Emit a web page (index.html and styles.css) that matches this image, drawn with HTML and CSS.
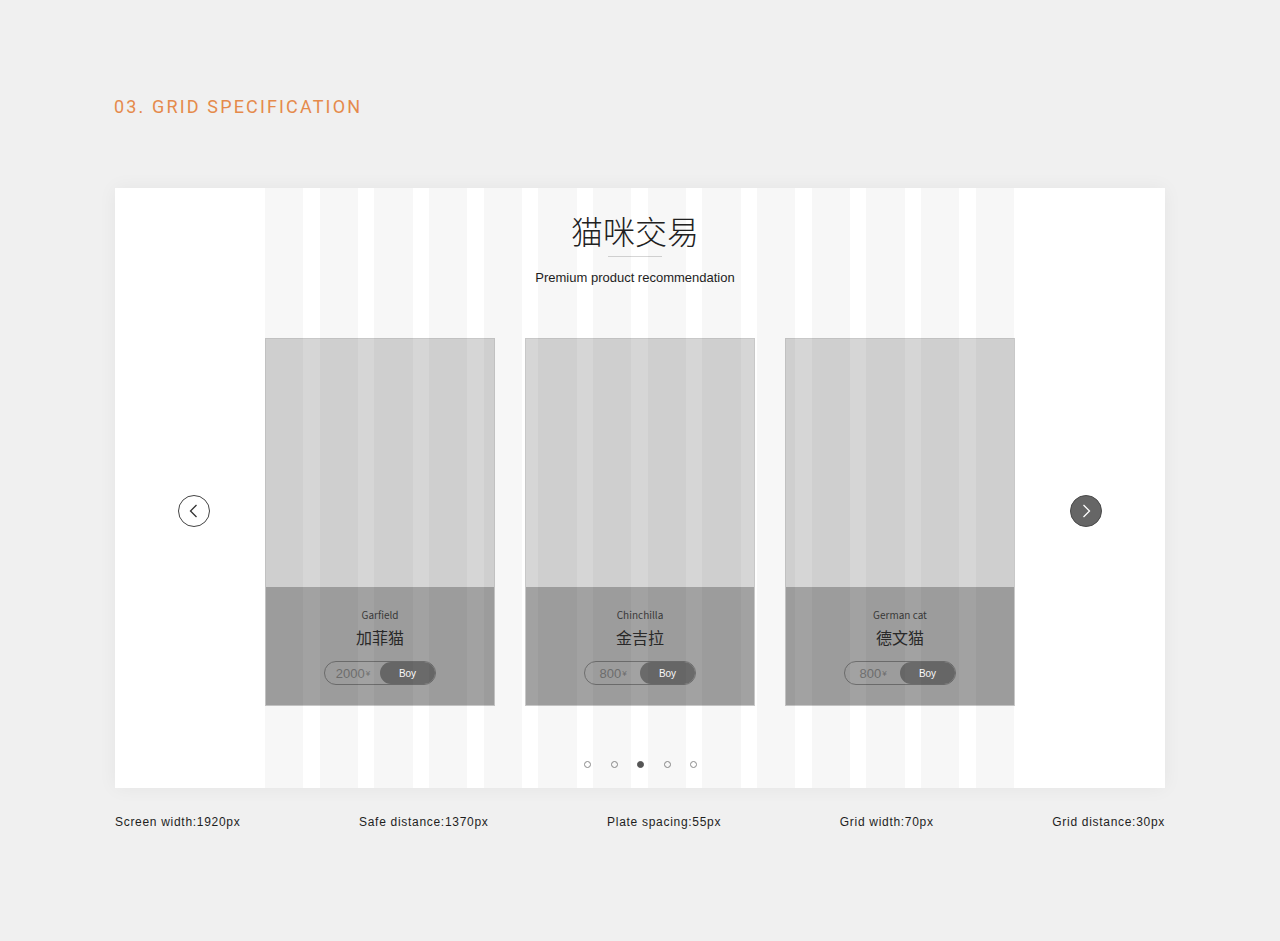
FILE: index.html
```html
<!DOCTYPE html>
<html lang="zh">
<head>
<meta charset="utf-8">
<title>Grid Specification</title>
<link rel="stylesheet" href="styles.css">
</head>
<body>
<div class="page">
  <h1 class="section-title">03. GRID SPECIFICATION</h1>

  <div class="panel">
    <div class="grid-overlay">
      <span></span><span></span><span></span><span></span><span></span><span></span><span></span>
      <span></span><span></span><span></span><span></span><span></span><span></span><span></span>
    </div>

    <div class="heading">
      <h2 class="heading-title">猫咪交易</h2>
      <div class="heading-rule"></div>
      <p class="heading-sub">Premium product recommendation</p>
    </div>

    <div class="carousel">
      <button class="arrow arrow-prev" aria-label="prev">
        <svg viewBox="0 0 32 32" width="32" height="32"><path d="M18.5 10 L12.5 16 L18.5 22" fill="none" stroke="#333" stroke-width="1.3"/></svg>
      </button>

      <div class="cards">
        <div class="card">
          <div class="card-img"></div>
          <div class="card-info">
            <div class="card-en">Garfield</div>
            <div class="card-cn">加菲猫</div>
            <div class="pill"><span class="pill-price">2000<small>¥</small></span><span class="pill-btn">Boy</span></div>
          </div>
        </div>
        <div class="card">
          <div class="card-img"></div>
          <div class="card-info">
            <div class="card-en">Chinchilla</div>
            <div class="card-cn">金吉拉</div>
            <div class="pill"><span class="pill-price">800<small>¥</small></span><span class="pill-btn">Boy</span></div>
          </div>
        </div>
        <div class="card">
          <div class="card-img"></div>
          <div class="card-info">
            <div class="card-en">German cat</div>
            <div class="card-cn">德文猫</div>
            <div class="pill"><span class="pill-price">800<small>¥</small></span><span class="pill-btn">Boy</span></div>
          </div>
        </div>
      </div>

      <button class="arrow arrow-next" aria-label="next">
        <svg viewBox="0 0 32 32" width="32" height="32"><path d="M13.5 10 L19.5 16 L13.5 22" fill="none" stroke="#fff" stroke-width="1.3"/></svg>
      </button>
    </div>

    <div class="dots">
      <span class="dot"></span><span class="dot"></span><span class="dot active"></span><span class="dot"></span><span class="dot"></span>
    </div>
  </div>

  <div class="specs">
    <span>Screen width:1920px</span>
    <span>Safe distance:1370px</span>
    <span>Plate spacing:55px</span>
    <span>Grid width:70px</span>
    <span>Grid distance:30px</span>
  </div>
</div>
</body>
</html>
```

FILE: styles.css
```css
* { box-sizing: border-box; }
html, body { margin: 0; padding: 0; }
body {
  background: #f0f0f0;
  font-family: "Liberation Sans", Arial, sans-serif;
  width: 1280px;
  height: 941px;
  overflow: hidden;
}
.page {
  padding: 95px 115px 0 115px;
}
.section-title {
  margin: 0 0 0 -1px;
  font-family: Roboto, "Liberation Sans", sans-serif;
  font-weight: 400;
  font-size: 18px;
  line-height: 24px;
  letter-spacing: 2.15px;
  color: #e58a4b;
}
.panel {
  position: relative;
  margin-top: 69px;
  width: 1050px;
  height: 600px;
  background: #fff;
  box-shadow: 0 0 18px rgba(0,0,0,0.05);
  padding-top: 21px;
}
.grid-overlay {
  position: absolute;
  top: 0; bottom: 0;
  left: 150px;
  width: 749px;
  display: flex;
  justify-content: space-between;
  pointer-events: none;
  z-index: 2;
}
.grid-overlay span {
  width: 38.3px;
  background: rgba(0,0,0,0.03);
}
.heading {
  position: relative;
  z-index: 1;
  text-align: center;
  padding-right: 10px;
}
.heading-title {
  margin: 0;
  font-family: "Noto Sans CJK SC", sans-serif;
  font-weight: 300;
  font-size: 32px;
  line-height: 42px;
  color: #222;
}
.heading-rule {
  width: 54px;
  height: 1px;
  background: #d6d6d6;
  margin: 5px auto 0;
}
.heading-sub {
  margin: 13px 0 0;
  font-size: 13px;
  line-height: 16px;
  color: #1e1e1e;
}
.carousel {
  display: flex;
  justify-content: center;
  align-items: center;
  gap: 55px;
  margin-top: 52px;
}
.arrow {
  width: 32px;
  height: 32px;
  padding: 0;
  border-radius: 50%;
  border: 1px solid #444;
  background: #fff;
  display: flex;
  align-items: center;
  justify-content: center;
  margin-bottom: 22px;
}
.arrow svg { display: block; flex: none; }
.arrow-next {
  background: #666;
  border-color: #4a4a4a;
}
.cards {
  display: flex;
  gap: 30px;
}
.card {
  width: 230px;
  height: 368px;
  display: flex;
  flex-direction: column;
  border: 1px solid #c8c8c8;
}
.card-img {
  height: 248px;
  background: #d6d6d6;
}
.card-info {
  flex: 1;
  background: #a2a2a2;
  display: flex;
  flex-direction: column;
  align-items: center;
  padding-top: 22px;
  font-family: "Noto Sans CJK SC", sans-serif;
}
.card-en {
  font-size: 10px;
  line-height: 12px;
  color: #3a3a3a;
}
.card-cn {
  margin-top: 6px;
  font-size: 16px;
  line-height: 20px;
  color: #2a2a2a;
}
.pill {
  margin-top: 14px;
  width: 112px;
  height: 24px;
  border: 1px solid #6e6e6e;
  border-radius: 12px;
  display: flex;
  align-items: stretch;
  overflow: hidden;
}
.pill-price {
  flex: 1;
  display: flex;
  align-items: center;
  justify-content: center;
  font-family: "Liberation Sans", Arial, sans-serif;
  font-size: 13px;
  color: #707070;
  padding-left: 1px;
}
.pill-price small { font-size: 8px; margin-left: 1px; }
.pill-btn {
  width: 55px;
  background: #6a6a6a;
  border-radius: 12px;
  color: #fff;
  font-family: "Liberation Sans", Arial, sans-serif;
  font-size: 10px;
  display: flex;
  align-items: center;
  justify-content: center;
}
.dots {
  display: flex;
  justify-content: center;
  gap: 19.5px;
  margin-top: 55px;
  padding-left: 1px;
}
.dot {
  width: 7px;
  height: 7px;
  border-radius: 50%;
  border: 1px solid #8a8a8a;
  background: #fff;
}
.dot.active {
  background: #555;
  border-color: #555;
}
.specs {
  display: flex;
  justify-content: space-between;
  width: 1050px;
  margin-top: 27px;
  font-size: 12px;
  line-height: 14px;
  letter-spacing: 0.7px;
  color: #1e1e1e;
}
```
